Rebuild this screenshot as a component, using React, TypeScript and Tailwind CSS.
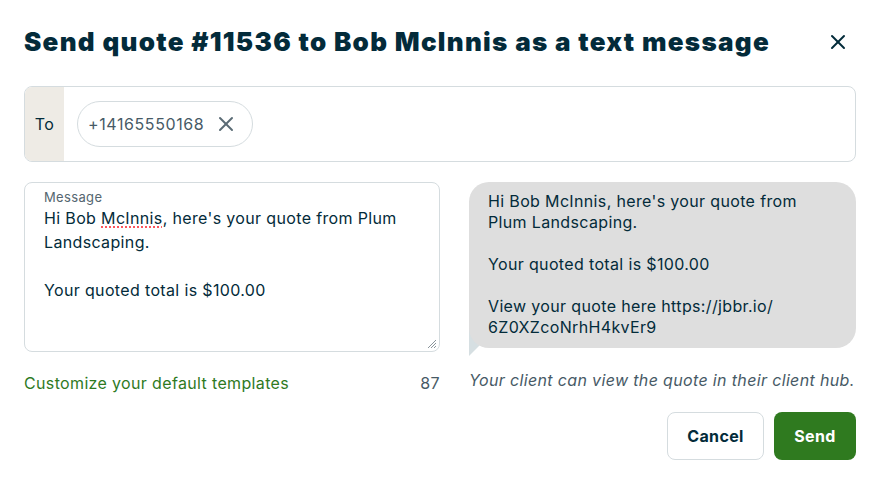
import { X } from 'lucide-react'

const BUBBLE_LINES = [
  "Hi Bob McInnis, here's your quote from",
  'Plum Landscaping.',
  '',
  'Your quoted total is $100.00',
  '',
  'View your quote here https://jbbr.io/',
  '6Z0XZcoNrhH4kvEr9',
]

export default function App() {
  return (
    <div className="w-[880px] h-[483px] bg-white px-6 text-[#032b3a] tracking-[0.35px]" style={{ fontFamily: 'Inter, "Liberation Sans", sans-serif' }}>
      {/* Header */}
      <div className="flex items-center justify-between pt-[24px] h-[60px]">
        <h1 className="text-[26px] font-black leading-[36px] tracking-[1.3px]">
          Send quote #11536 to Bob McInnis as a text message
        </h1>
        <button className="mr-[6px] text-[#032b3a]">
          <X size={24} strokeWidth={2} />
        </button>
      </div>

      {/* To field */}
      <div className="mt-[26px] flex h-[76px] rounded-lg border border-[#d5dcdf] overflow-hidden">
        <div className="w-[39px] bg-[#eeebe5] flex items-center justify-center text-base text-[#032b3a]">To</div>
        <div className="flex items-center pl-[13px]">
          <div className="flex items-center gap-[10px] h-[46px] rounded-full border border-[#d5dcdf] pl-[10px] pr-[14px] text-base text-[#475a66] tracking-[0.6px]">
            <span>+14165550168</span>
            <X size={24} strokeWidth={2} className="text-[#5a6b75]" />
          </div>
        </div>
      </div>

      {/* Message + preview */}
      <div className="mt-[20px] flex">
        <div className="w-[416px]">
          <div className="relative h-[170px] rounded-lg border border-[#d5dcdf] pl-[19px] pr-4 pt-[6px]">
            <div className="text-[13px] leading-[16px] text-[#556670]">Message</div>
            <div className="text-base leading-[24px] mt-[1px]">
              <div>
                Hi Bob <span className="underline decoration-dotted decoration-red-500 underline-offset-[3px]">McInnis</span>, here's your quote from Plum
              </div>
              <div>Landscaping.</div>
              <div className="h-[24px]" />
              <div>Your quoted total is $100.00</div>
            </div>
            <svg className="absolute right-[2px] bottom-[2px]" width="12" height="12" viewBox="0 0 12 12">
              <path d="M11 3 L3 11 M11 6 L6 11 M11 9 L9 11" stroke="#8a959b" strokeWidth="1" />
            </svg>
          </div>
          <div className="mt-[19px] flex justify-between text-base leading-[24px]">
            <span className="text-[#2f7a1f]">Customize your default templates</span>
            <span className="text-[#475a66]">87</span>
          </div>
        </div>

        <div className="ml-[29px] flex-1">
          <div className="relative">
            <svg className="absolute left-0 top-[141px]" width="16" height="34" viewBox="0 0 16 34">
              <polygon points="0,0 0,33 15,18" fill="#d6dfe2" />
            </svg>
            <div className="relative h-[166px] rounded-[20px] bg-[#dedede] pl-[19px] pt-[9px] text-base leading-[21px]">
              {BUBBLE_LINES.map((l, i) => (
                <div key={i} className="h-[21px]">{l}</div>
              ))}
            </div>
          </div>
          <p className="mt-[20px] italic text-base leading-[24px] text-[#475a66]">
            Your client can view the quote in their client hub.
          </p>
        </div>
      </div>

      {/* Actions */}
      <div className="mt-[17px] flex justify-end gap-[10px]">
        <button className="h-[48px] w-[97px] rounded-lg border border-[#d5dcdf] text-base font-bold text-[#032b3a]">Cancel</button>
        <button className="h-[48px] w-[82px] rounded-lg bg-[#2f7a1f] text-base font-bold text-white">Send</button>
      </div>
    </div>
  )
}
